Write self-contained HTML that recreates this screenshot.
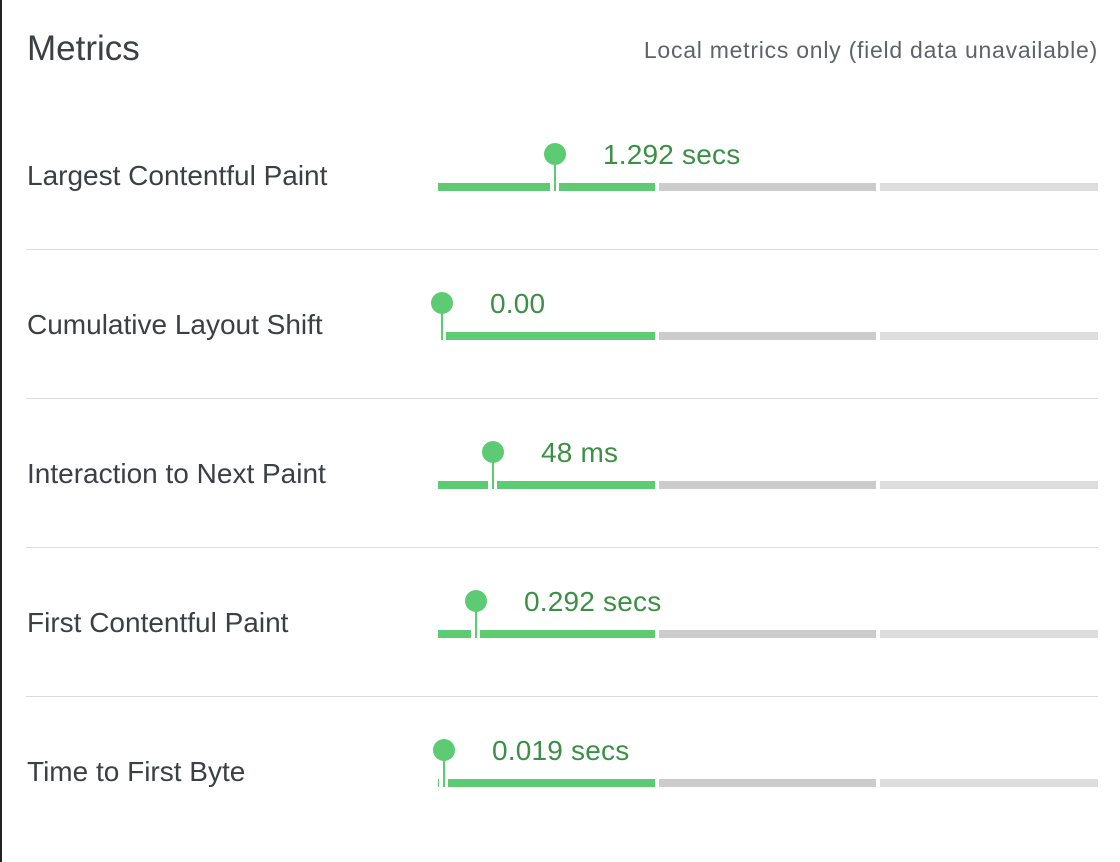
<!DOCTYPE html>
<html><head><style>
body{margin:0;width:1120px;height:862px;background:#fff;position:relative;overflow:hidden;font-family:"Liberation Sans",Arial,sans-serif;}
.lb{position:absolute;left:0;top:0;width:2px;height:862px;background:#222;}
.t{position:absolute;left:27px;top:29px;font-size:35px;color:#3c4043;}
.note{position:absolute;right:22px;top:37px;font-size:23px;letter-spacing:0.75px;color:#5f6368;white-space:nowrap;}
.lab{position:absolute;left:27px;font-size:28px;color:#3c4043;white-space:nowrap;}
.val{position:absolute;font-size:28px;letter-spacing:0.2px;color:#3d8f47;white-space:nowrap;}
.seg{position:absolute;height:8px;}
.g{background:#5ccb73;}
.dot{position:absolute;width:22px;height:22px;border-radius:50%;background:#5ccb73;}
.stem{position:absolute;width:2px;background:#5ccb73;}
.sep{position:absolute;left:26px;width:1072px;height:1px;background:#dadce0;}
</style></head><body>
<div class="lb"></div>
<div class="t">Metrics</div>
<div class="note">Local metrics only (field data unavailable)</div>
<div id="c"></div>
<script>
var rows=[["Largest Contentful Paint","1.292 secs",555],["Cumulative Layout Shift","0.00",442],["Interaction to Next Paint","48 ms",493],["First Contentful Paint","0.292 secs",476],["Time to First Byte","0.019 secs",444]];
var h="";
rows.forEach(function(r,i){
 var y=i*149, by=183+y, p=r[2];
 h+='<div class="lab" style="top:'+(160+y)+'px">'+r[0]+'</div>';
 h+='<div class="val" style="left:'+(p+48)+'px;top:'+(139+y)+'px">'+r[1]+'</div>';
 var l1=p-5; if(l1>438) h+='<div class="seg g" style="left:438px;top:'+by+'px;width:'+(l1-438)+'px"></div>';
 else if(p-4>438) h+='<div class="seg g" style="left:438px;top:'+by+'px;width:2px"></div>';
 var s2=p+4; h+='<div class="seg g" style="left:'+s2+'px;top:'+by+'px;width:'+(655-s2)+'px"></div>';
 h+='<div class="seg" style="background:#cccccc;left:659px;top:'+by+'px;width:217px"></div>';
 h+='<div class="seg" style="background:#dddddd;left:880px;top:'+by+'px;width:218px"></div>';
 h+='<div class="dot" style="left:'+(p-11)+'px;top:'+(143+y)+'px"></div>';
 h+='<div class="stem" style="left:'+(p-1)+'px;top:'+(160+y)+'px;height:31px"></div>';
 if(i<4) h+='<div class="sep" style="top:'+(249+y)+'px"></div>';
});
document.getElementById("c").innerHTML=h;
</script>
</body></html>
